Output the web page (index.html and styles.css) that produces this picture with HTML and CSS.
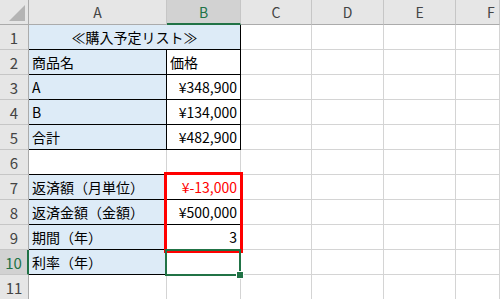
FILE: index.html
```html
<!DOCTYPE html>
<html lang="ja">
<head>
    <meta charset="UTF-8">
    <title>購入予定リスト</title>
    <link rel="stylesheet" href="styles.css">
</head>
<body>
    <div class="sheet">
        <!-- column headers -->
        <div class="corner"><span class="corner-mark"></span></div>
        <div class="col-head">A</div>
        <div class="col-head active">B</div>
        <div class="col-head">C</div>
        <div class="col-head">D</div>
        <div class="col-head">E</div>
        <div class="col-head last">F</div>

        <!-- 1 -->
        <div class="row-head">1</div>
        <div class="cell title fill bb br">≪購入予定リスト≫</div>
        <div class="cell"></div><div class="cell"></div><div class="cell"></div><div class="cell"></div>

        <!-- 2 -->
        <div class="row-head">2</div>
        <div class="cell fill bb br">商品名</div>
        <div class="cell bb br">価格</div>
        <div class="cell"></div><div class="cell"></div><div class="cell"></div><div class="cell"></div>

        <!-- 3 -->
        <div class="row-head">3</div>
        <div class="cell fill bb br">A</div>
        <div class="cell num bb br">¥348,900</div>
        <div class="cell"></div><div class="cell"></div><div class="cell"></div><div class="cell"></div>

        <!-- 4 -->
        <div class="row-head">4</div>
        <div class="cell fill bb br">B</div>
        <div class="cell num bb br">¥134,000</div>
        <div class="cell"></div><div class="cell"></div><div class="cell"></div><div class="cell"></div>

        <!-- 5 -->
        <div class="row-head">5</div>
        <div class="cell fill bb br">合計</div>
        <div class="cell num bb br">¥482,900</div>
        <div class="cell"></div><div class="cell"></div><div class="cell"></div><div class="cell"></div>

        <!-- 6 -->
        <div class="row-head">6</div>
        <div class="cell bb"></div>
        <div class="cell bb"></div>
        <div class="cell"></div><div class="cell"></div><div class="cell"></div><div class="cell"></div>

        <!-- 7 -->
        <div class="row-head">7</div>
        <div class="cell fill bb br">返済額（月単位）</div>
        <div class="cell num minus bb br">¥-13,000</div>
        <div class="cell"></div><div class="cell"></div><div class="cell"></div><div class="cell"></div>

        <!-- 8 -->
        <div class="row-head">8</div>
        <div class="cell fill bb br">返済金額（金額）</div>
        <div class="cell num bb br">¥500,000</div>
        <div class="cell"></div><div class="cell"></div><div class="cell"></div><div class="cell"></div>

        <!-- 9 -->
        <div class="row-head">9</div>
        <div class="cell fill bb br">期間（年）</div>
        <div class="cell num bb br">3</div>
        <div class="cell"></div><div class="cell"></div><div class="cell"></div><div class="cell"></div>

        <!-- 10 -->
        <div class="row-head active">10</div>
        <div class="cell fill bb br">利率（年）</div>
        <div class="cell bb br"></div>
        <div class="cell"></div><div class="cell"></div><div class="cell"></div><div class="cell"></div>

        <!-- 11 -->
        <div class="row-head">11</div>
        <div class="cell"></div><div class="cell"></div>
        <div class="cell"></div><div class="cell"></div><div class="cell"></div><div class="cell"></div>

        <!-- overlays: highlight on B7:B9, selection on B10 -->
        <div class="highlight"></div>
        <div class="selection"><span class="handle"></span></div>
    </div>
</body>
</html>
```
FILE: styles.css
```css
body {
    margin: 0;
    background: #fff;
    overflow: hidden;
    font-family: "Noto Sans CJK JP", "Noto Sans", sans-serif;
}

/* last column is cut off by the window, so it just takes what's left */
.sheet {
    position: relative;
    display: grid;
    grid-template-columns: 29px 138px 74px 71px 72px 72px 1fr;
    grid-template-rows: 25px repeat(11, 25px);
    width: 500px;
}

.corner,
.col-head,
.row-head {
    box-sizing: border-box;
    background: #e6e6e6;
    color: #444;
    font-size: 14px;
    display: flex;
    align-items: center;
    justify-content: center;
}

.corner {
    position: relative;
    border-right: 1px solid #ababab;
    border-bottom: 1px solid #ababab;
}

.corner-mark {
    position: absolute;
    right: 3px;
    bottom: 3px;
    width: 0;
    height: 0;
    border-left: 16px solid transparent;
    border-bottom: 16px solid #b4b4b4;
}

.col-head {
    border-right: 1px solid #c6c6c6;
    border-bottom: 1px solid #ababab;
}

.col-head.last {
    justify-content: flex-start;
    padding-left: 31px;
}

.col-head.active {
    background: #d2d2d2;
    color: #217346;
    border-bottom: 2px solid #217346;
}

.row-head {
    border-right: 1px solid #ababab;
    border-bottom: 1px solid #c6c6c6;
    font-size: 15px;
}

.row-head.active {
    background: #d2d2d2;
    color: #217346;
    border-right: 2px solid #217346;
}

.cell {
    box-sizing: border-box;
    border-right: 1px solid #d4d4d4;
    border-bottom: 1px solid #d4d4d4;
    font-size: 14px;
    color: #000;
    padding: 0 3px;
    display: flex;
    align-items: center;
    white-space: nowrap;
}

.cell.fill {
    background: #ddebf7;
}

.cell.bb {
    border-bottom-color: #000;
}

.cell.br {
    border-right-color: #000;
}

.title {
    grid-column: span 2;
    justify-content: center;
}

.num {
    justify-content: flex-end;
}

.minus {
    color: #ff0000;
}

.highlight {
    position: absolute;
    grid-area: 8 / 3 / 11 / 4;
    top: -3px;
    left: -3px;
    right: -2px;
    bottom: -3px;
    border: 3px solid #ff0000;
}

.selection {
    position: absolute;
    grid-area: 11 / 3 / 12 / 4;
    top: -1px;
    left: -2px;
    right: 0;
    bottom: -1px;
    border: 2px solid #217346;
}

.handle {
    position: absolute;
    right: -5px;
    bottom: -5px;
    width: 6px;
    height: 6px;
    background: #217346;
    border: 1px solid #fff;
}
```
